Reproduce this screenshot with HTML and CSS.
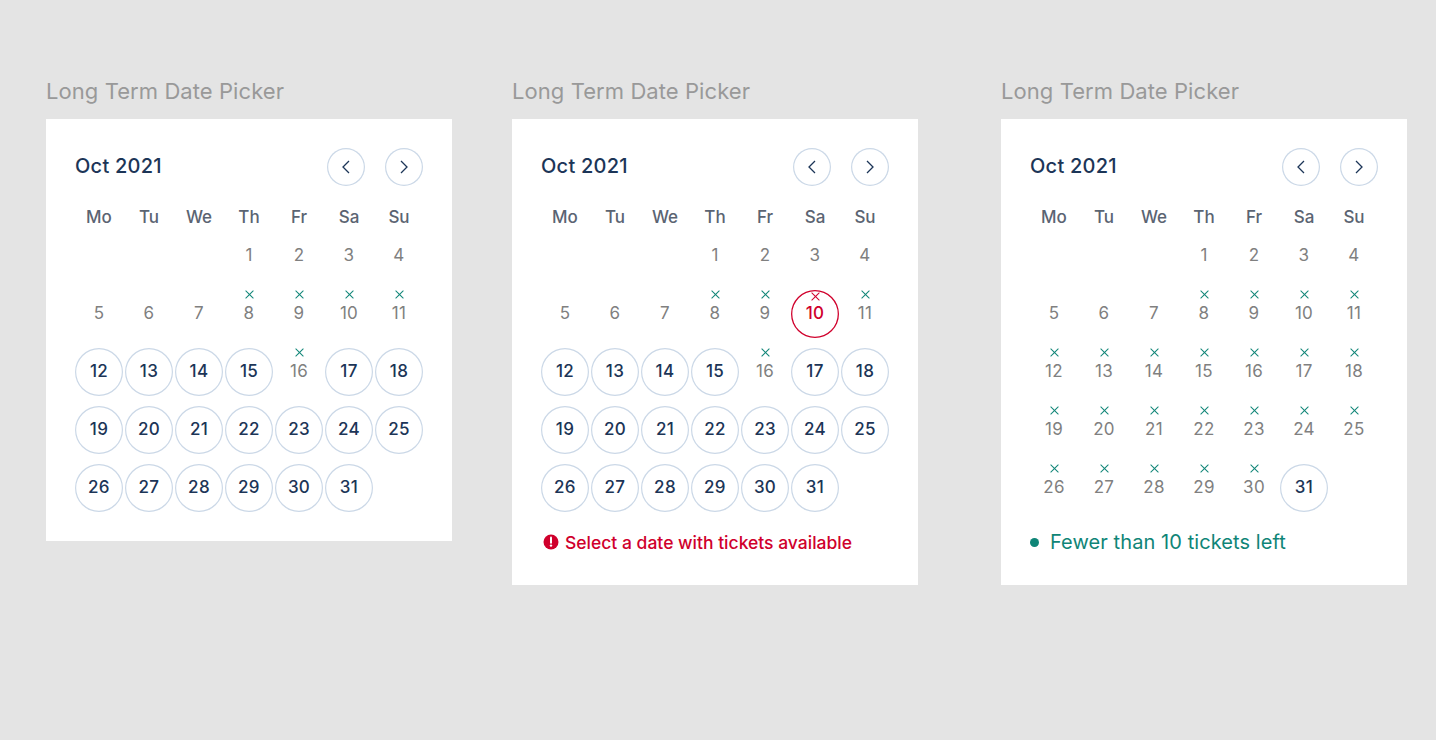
FILE: index.html
```html
<!DOCTYPE html>
<html lang="en">
<head>
    <meta charset="UTF-8">
    <title>Long Term Date Picker</title>
    <link rel="stylesheet" href="styles.css">
</head>
<body>

<svg class="icon-defs" aria-hidden="true">
    <symbol id="prev" viewBox="0 0 8 14"><path d="M7 1L1 7l6 6" fill="none" stroke="#1c3557" stroke-width="1.3"/></symbol>
    <symbol id="next" viewBox="0 0 8 14"><path d="M1 1l6 6-6 6" fill="none" stroke="#1c3557" stroke-width="1.3"/></symbol>
</svg>

<div class="picker picker-first">
    <h2>Long Term Date Picker</h2>
    <div class="card">
        <div class="card-head">
            <span class="month">Oct 2021</span>
            <button class="nav"><svg width="8" height="14"><use href="#prev"/></svg></button>
            <button class="nav"><svg width="8" height="14"><use href="#next"/></svg></button>
        </div>
        <div class="weekdays"><span>Mo</span><span>Tu</span><span>We</span><span>Th</span><span>Fr</span><span>Sa</span><span>Su</span></div>
        <div class="days">
            <span class="day blank"></span><span class="day blank"></span><span class="day blank"></span>
            <span class="day">1</span><span class="day">2</span><span class="day">3</span><span class="day">4</span>
            <span class="day">5</span><span class="day">6</span><span class="day">7</span>
            <span class="day sold">8</span><span class="day sold">9</span><span class="day sold">10</span><span class="day sold">11</span>
            <span class="day open">12</span><span class="day open">13</span><span class="day open">14</span><span class="day open">15</span>
            <span class="day sold">16</span>
            <span class="day open">17</span><span class="day open">18</span>
            <span class="day open">19</span><span class="day open">20</span><span class="day open">21</span><span class="day open">22</span><span class="day open">23</span><span class="day open">24</span><span class="day open">25</span>
            <span class="day open">26</span><span class="day open">27</span><span class="day open">28</span><span class="day open">29</span><span class="day open">30</span><span class="day open">31</span>
        </div>
    </div>
</div>

<div class="picker picker-second">
    <h2>Long Term Date Picker</h2>
    <div class="card">
        <div class="card-head">
            <span class="month">Oct 2021</span>
            <button class="nav"><svg width="8" height="14"><use href="#prev"/></svg></button>
            <button class="nav"><svg width="8" height="14"><use href="#next"/></svg></button>
        </div>
        <div class="weekdays"><span>Mo</span><span>Tu</span><span>We</span><span>Th</span><span>Fr</span><span>Sa</span><span>Su</span></div>
        <div class="days">
            <span class="day blank"></span><span class="day blank"></span><span class="day blank"></span>
            <span class="day">1</span><span class="day">2</span><span class="day">3</span><span class="day">4</span>
            <span class="day">5</span><span class="day">6</span><span class="day">7</span>
            <span class="day sold">8</span><span class="day sold">9</span><span class="day sold selected">10</span><span class="day sold">11</span>
            <span class="day open">12</span><span class="day open">13</span><span class="day open">14</span><span class="day open">15</span>
            <span class="day sold">16</span>
            <span class="day open">17</span><span class="day open">18</span>
            <span class="day open">19</span><span class="day open">20</span><span class="day open">21</span><span class="day open">22</span><span class="day open">23</span><span class="day open">24</span><span class="day open">25</span>
            <span class="day open">26</span><span class="day open">27</span><span class="day open">28</span><span class="day open">29</span><span class="day open">30</span><span class="day open">31</span>
        </div>
        <div class="message message-error">
            <svg width="16" height="16" viewBox="0 0 16 16"><circle cx="8" cy="8" r="7.5" fill="#d0002c"/><path d="M8 3.6v5.2" stroke="#fff" stroke-width="2" stroke-linecap="round"/><circle cx="8" cy="11.6" r="1.2" fill="#fff"/></svg>
            Select a date with tickets available
        </div>
    </div>
</div>

<div class="picker">
    <h2>Long Term Date Picker</h2>
    <div class="card">
        <div class="card-head">
            <span class="month">Oct 2021</span>
            <button class="nav"><svg width="8" height="14"><use href="#prev"/></svg></button>
            <button class="nav"><svg width="8" height="14"><use href="#next"/></svg></button>
        </div>
        <div class="weekdays"><span>Mo</span><span>Tu</span><span>We</span><span>Th</span><span>Fr</span><span>Sa</span><span>Su</span></div>
        <div class="days">
            <span class="day blank"></span><span class="day blank"></span><span class="day blank"></span>
            <span class="day">1</span><span class="day">2</span><span class="day">3</span><span class="day">4</span>
            <span class="day">5</span><span class="day">6</span><span class="day">7</span>
            <span class="day sold">8</span><span class="day sold">9</span><span class="day sold">10</span><span class="day sold">11</span>
            <span class="day sold">12</span><span class="day sold">13</span><span class="day sold">14</span><span class="day sold">15</span><span class="day sold">16</span><span class="day sold">17</span><span class="day sold">18</span>
            <span class="day sold">19</span><span class="day sold">20</span><span class="day sold">21</span><span class="day sold">22</span><span class="day sold">23</span><span class="day sold">24</span><span class="day sold">25</span>
            <span class="day sold">26</span><span class="day sold">27</span><span class="day sold">28</span><span class="day sold">29</span><span class="day sold">30</span>
            <span class="day open">31</span>
        </div>
        <div class="message message-few">
            <span class="dot"></span>
            Fewer than 10 tickets left
        </div>
    </div>
</div>

</body>
</html>
```

FILE: styles.css
```css
* {
    margin: 0;
    box-sizing: border-box;
    font-family: Inter, "Liberation Sans", sans-serif;
}

body {
    display: flex;
    align-items: flex-start;
    height: 100vh;
    padding: 78px 0 0 46px;
    background-color: #e4e4e4;
}

.icon-defs {
    position: absolute;
    width: 0;
    height: 0;
}

.picker {
    width: 406px;
}

.picker-first {
    margin-right: 60px;
}

.picker-second {
    margin-right: 83px;
}

h2 {
    height: 41px;
    font-size: 22px;
    line-height: 27px;
    font-weight: 400;
    letter-spacing: .07px;
    color: #999999;
}

.card {
    padding: 29px;
    background-color: white;
}

.card-head {
    display: flex;
    align-items: center;
    gap: 20px;
    height: 38px;
    margin-bottom: 20px;
}

.month {
    flex: 1;
    margin-top: -3px;
    font-size: 20px;
    font-weight: 500;
    letter-spacing: .25px;
    color: #1c3557;
}

.nav {
    display: flex;
    align-items: center;
    justify-content: center;
    width: 38px;
    height: 38px;
    padding: 0;
    border: none;
    border-radius: 50%;
    box-shadow: inset 0 0 0 1.2px #cbd8e7;
    background-color: white;
}

.weekdays, .days {
    display: grid;
    grid-template-columns: repeat(7, 48px);
    column-gap: 2px;
}

.weekdays {
    height: 22px;
    margin-bottom: 4px;
    font-size: 17px;
    line-height: 22px;
    font-weight: 500;
    text-align: center;
    color: #5b6472;
}

.days {
    row-gap: 10px;
}

.day {
    position: relative;
    display: flex;
    align-items: center;
    justify-content: center;
    height: 48px;
    padding-bottom: 2px;
    font-size: 17px;
    letter-spacing: .3px;
    color: #808080;
}

.open {
    border-radius: 50%;
    box-shadow: inset 0 0 0 1.2px #cbd8e7;
    font-weight: 500;
    color: #1c3557;
}

.selected {
    border-radius: 50%;
    box-shadow: inset 0 0 0 1.3px #d0002c;
    font-weight: 500;
    color: #d0002c;
}

/* the little x over a sold out day */
.sold::before, .sold::after {
    content: "";
    position: absolute;
    top: 4px;
    left: 50%;
    width: 11px;
    height: 1px;
    margin-left: -5.5px;
    background-color: #0f8577;
    transform: rotate(45deg);
}

.sold::after {
    transform: rotate(-45deg);
}

.selected::before, .selected::after {
    top: 6px;
    background-color: #d0002c;
}

.message {
    display: flex;
    align-items: center;
    gap: 6px;
    margin-top: 20px;
    margin-bottom: 4px;
    height: 20px;
    font-size: 17.5px;
}

.message-error {
    padding-left: 2px;
    font-weight: 500;
    color: #d0002c;
}

.message-few {
    color: #0f8577;
    gap: 11px;
    font-size: 20px;
    letter-spacing: .08px;
}

.dot {
    width: 9px;
    height: 9px;
    border-radius: 50%;
    background-color: #0f8577;
}
```
